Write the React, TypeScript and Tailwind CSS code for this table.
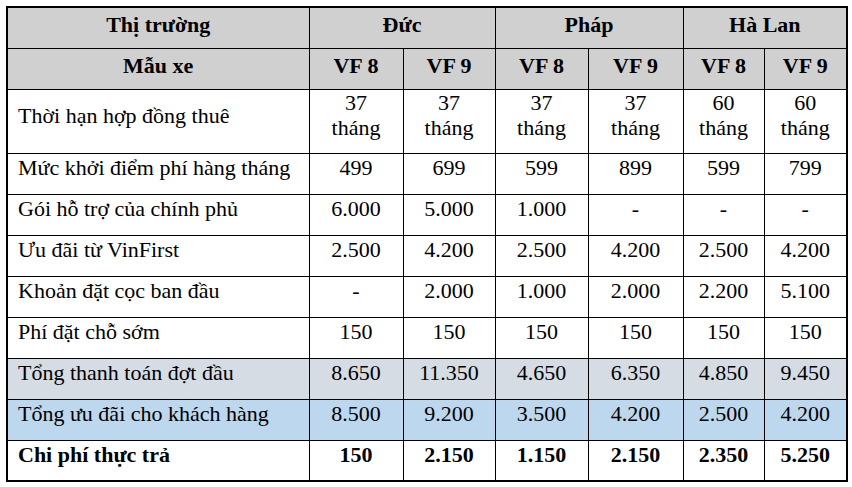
import React from 'react';

type Row = {
  label: string;
  values: string[];
  tone?: 'gray' | 'blue';
  bold?: boolean;
  tall?: boolean;
};

const rows: Row[] = [
  { label: 'Thời hạn hợp đồng thuê', values: ['37 tháng', '37 tháng', '37 tháng', '37 tháng', '60 tháng', '60 tháng'], tall: true },
  { label: 'Mức khởi điểm phí hàng tháng', values: ['499', '699', '599', '899', '599', '799'] },
  { label: 'Gói hỗ trợ của chính phủ', values: ['6.000', '5.000', '1.000', '-', '-', '-'] },
  { label: 'Ưu đãi từ VinFirst', values: ['2.500', '4.200', '2.500', '4.200', '2.500', '4.200'] },
  { label: 'Khoản đặt cọc ban đầu', values: ['-', '2.000', '1.000', '2.000', '2.200', '5.100'] },
  { label: 'Phí đặt chỗ sớm', values: ['150', '150', '150', '150', '150', '150'] },
  { label: 'Tổng thanh toán đợt đầu', values: ['8.650', '11.350', '4.650', '6.350', '4.850', '9.450'], tone: 'gray' },
  { label: 'Tổng ưu đãi cho khách hàng', values: ['8.500', '9.200', '3.500', '4.200', '2.500', '4.200'], tone: 'blue' },
  { label: 'Chi phí thực trả', values: ['150', '2.150', '1.150', '2.150', '2.350', '5.250'], bold: true },
];

const models = ['VF 8', 'VF 9', 'VF 8', 'VF 9', 'VF 8', 'VF 9'];

const cell = "border border-black p-0 [font-family:'Liberation_Serif','Times_New_Roman',serif]";

export default function App() {
  return (
    <div className="w-[852px] h-[487px] bg-white pt-[6px] pl-[6px] text-black [font-family:'Liberation_Serif','Times_New_Roman',serif] text-[22px] leading-[25px]">
      <table className="border-collapse border-2 border-black table-fixed w-[840px] text-[22px] leading-[25px]">
        <colgroup>
          <col className="w-[302px]" />
          <col className="w-[94px]" />
          <col className="w-[92px]" />
          <col className="w-[93px]" />
          <col className="w-[95px]" />
          <col className="w-[81px]" />
          <col className="w-[83px]" />
        </colgroup>
        <thead>
          <tr className="h-[41px] bg-[#d0d0d0] font-bold">
            <th className={`${cell} pb-[6px]`}>Thị trường</th>
            <th className={`${cell} pb-[6px]`} colSpan={2}>Đức</th>
            <th className={`${cell} pb-[6px]`} colSpan={2}>Pháp</th>
            <th className={`${cell} pb-[6px]`} colSpan={2}>Hà Lan</th>
          </tr>
          <tr className="h-[41px] bg-[#d0d0d0] font-bold">
            <th className={`${cell} pb-[6px]`}>Mẫu xe</th>
            {models.map((m, i) => (
              <th key={i} className={`${cell} pb-[6px]`}>{m}</th>
            ))}
          </tr>
        </thead>
        <tbody>
          {rows.map((r) => (
            <tr
              key={r.label}
              className={`${r.tall ? 'h-[64px]' : 'h-[41px]'} ${
                r.tone === 'gray' ? 'bg-[#d6dce4]' : r.tone === 'blue' ? 'bg-[#bdd7ee]' : 'bg-white'
              } ${r.bold ? 'font-bold' : ''}`}
            >
              <td className={`${cell} pl-[10px] pb-[12px] text-left`}>{r.label}</td>
              {r.values.map((v, i) => (
                <td key={i} className={`${cell} pb-[12px] text-center`}>
                  {r.tall ? (
                    <>
                      {v.split(' ')[0]}
                      <br />
                      {v.split(' ')[1]}
                    </>
                  ) : (
                    v
                  )}
                </td>
              ))}
            </tr>
          ))}
        </tbody>
      </table>
    </div>
  );
}
